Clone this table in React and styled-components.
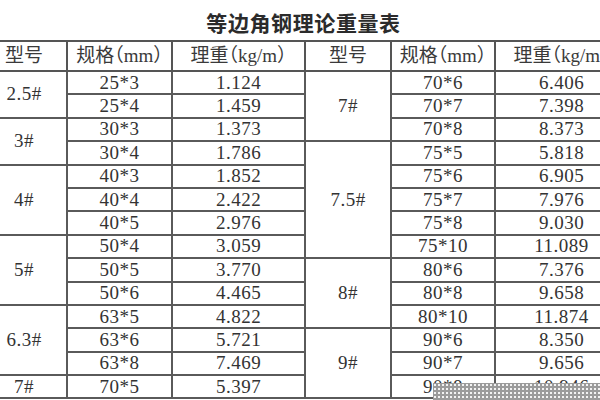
import React from 'react';
import styled, { createGlobalStyle } from 'styled-components';

const leftGroups = [
    ['2.5#', [['25*3', '1.124'], ['25*4', '1.459']]],
    ['3#', [['30*3', '1.373'], ['30*4', '1.786']]],
    ['4#', [['40*3', '1.852'], ['40*4', '2.422'], ['40*5', '2.976']]],
    ['5#', [['50*4', '3.059'], ['50*5', '3.770'], ['50*6', '4.465']]],
    ['6.3#', [['63*5', '4.822'], ['63*6', '5.721'], ['63*8', '7.469']]],
    ['7#', [['70*5', '5.397']]],
];

const rightGroups = [
    ['7#', [['70*6', '6.406'], ['70*7', '7.398'], ['70*8', '8.373']]],
    ['7.5#', [['75*5', '5.818'], ['75*6', '6.905'], ['75*7', '7.976'], ['75*8', '9.030'], ['75*10', '11.089']]],
    ['8#', [['80*6', '7.376'], ['80*8', '9.658'], ['80*10', '11.874']]],
    ['9#', [['90*6', '8.350'], ['90*7', '9.656'], ['90*8', '10.946']]],
];

// 把分组摊平成逐行数据，组内第一行带型号和合并行数
function flatten(groups) {
    const rows = [];
    groups.forEach(([type, items]) => {
        items.forEach(([spec, weight], i) => {
            rows.push({ type: i === 0 ? type : null, span: items.length, spec, weight });
        });
    });
    return rows;
}

const leftRows = flatten(leftGroups);
const rightRows = flatten(rightGroups);

const GlobalStyle = createGlobalStyle`
    html, body {
        margin: 0;
        padding: 0;
        background: #ffffff;
        overflow: hidden;
    }
`;

const Page = styled.div`
    position: relative;
    width: 600px;
    height: 400px;
    overflow: hidden;
    background: #ffffff;
`;

const Title = styled.h1`
    box-sizing: border-box;
    width: 647px;
    height: 40px;
    margin: 0 0 0 -20px;
    padding-top: 4px;
    line-height: 36px;
    text-align: center;
    font-family: "Noto Sans CJK SC", sans-serif;
    font-weight: 700;
    font-size: 21px;
    letter-spacing: 0.6px;
    color: #2b2b2b;
`;

const Sheet = styled.table`
    width: 647px;
    margin-left: -20px;
    border-collapse: collapse;
    table-layout: fixed;
    color: #333333;
`;

const HeadCell = styled.th`
    height: 28px;
    padding: 0;
    border: 2px solid #555555;
    font-family: "Liberation Serif", "Noto Sans CJK SC", serif;
    font-feature-settings: "halt";
    font-weight: 400;
    font-size: 19px;
    line-height: 22px;
    white-space: nowrap;
    overflow: hidden;
    text-align: center;
    vertical-align: middle;
    color: #3a3a3a;
`;

const Cell = styled.td`
    height: 21.4px;
    padding: 0;
    border: 2px solid #5a5a5a;
    font-family: "Liberation Serif", "DejaVu Serif", serif;
    font-size: 19px;
    line-height: 20px;
    letter-spacing: 0.5px;
    white-space: nowrap;
    text-align: center;
    vertical-align: middle;
    color: #333333;
`;

const Watermark = styled.div`
    position: absolute;
    left: 433px;
    top: 383px;
    width: 167px;
    height: 17px;
    background-color: #9b9b9b;
    background-image: radial-gradient(circle, #f2f2f2 0.9px, transparent 1.2px);
    background-size: 4px 4px;
    background-position: 0 0;
`;

const cols = [86, 105, 133, 86, 104, 133];
const heads = ['型号', '规格（mm）', '理重（kg/m）'];

export default function App() {
    return (
        <Page>
            <GlobalStyle />
            <Title>等边角钢理论重量表</Title>
            <Sheet>
                <colgroup>
                    {cols.map((w, i) => <col key={i} style={{ width: w }} />)}
                </colgroup>
                <thead>
                    <tr>
                        {[...heads, ...heads].map((h, i) => <HeadCell key={i}>{h}</HeadCell>)}
                    </tr>
                </thead>
                <tbody>
                    {leftRows.map((l, i) => {
                        const r = rightRows[i];
                        return (
                            <tr key={i}>
                                {l.type && <Cell rowSpan={l.span}>{l.type}</Cell>}
                                <Cell>{l.spec}</Cell>
                                <Cell>{l.weight}</Cell>
                                {r.type && <Cell rowSpan={r.span}>{r.type}</Cell>}
                                <Cell>{r.spec}</Cell>
                                <Cell>{r.weight}</Cell>
                            </tr>
                        );
                    })}
                </tbody>
            </Sheet>
            <Watermark />
        </Page>
    );
}
